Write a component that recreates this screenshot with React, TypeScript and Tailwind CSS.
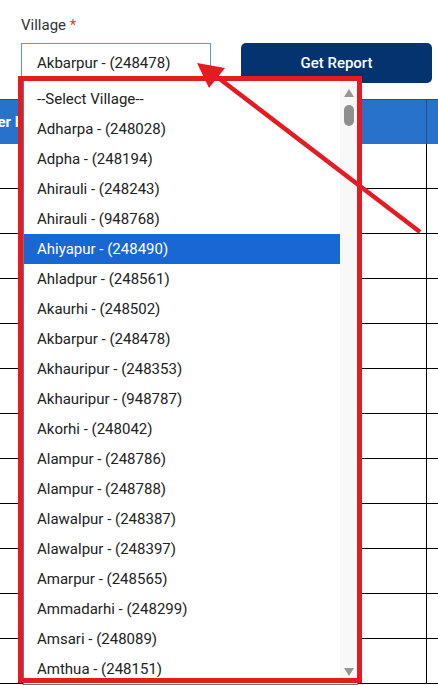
import React from 'react';

const villages = [
  '--Select Village--',
  'Adharpa - (248028)',
  'Adpha - (248194)',
  'Ahirauli - (248243)',
  'Ahirauli - (948768)',
  'Ahiyapur - (248490)',
  'Ahladpur - (248561)',
  'Akaurhi - (248502)',
  'Akbarpur - (248478)',
  'Akhauripur - (248353)',
  'Akhauripur - (948787)',
  'Akorhi - (248042)',
  'Alampur - (248786)',
  'Alampur - (248788)',
  'Alawalpur - (248387)',
  'Alawalpur - (248397)',
  'Amarpur - (248565)',
  'Ammadarhi - (248299)',
  'Amsari - (248089)',
  'Amthua - (248151)',
];

const highlighted = 'Ahiyapur - (248490)';

export default function App() {
  const rows = Array.from({ length: 12 });

  return (
    <div
      className="relative w-[438px] h-[685px] overflow-hidden bg-white text-[#222]"
      style={{ fontFamily: 'Roboto, "Liberation Sans", sans-serif' }}
    >
      {/* form */}
      <div className="pl-[21px] pt-[15px]">
        <label className="block text-[15px] leading-[20px] text-[#333]">
          Village <span className="text-[#e53935]">*</span>
        </label>
        <div className="mt-[8px] flex">
          <div className="w-[190px] h-[40px] border border-[#5b9bc9] flex items-center pl-[15px] text-[15px]">
            Akbarpur - (248478)
          </div>
          <button className="ml-[30px] w-[191px] h-[40px] rounded-[5px] bg-[#053370] text-white text-[15px] font-medium">
            Get Report
          </button>
        </div>
      </div>

      {/* table */}
      <div className="mt-[16px] ml-[-60px] w-[520px]">
        <div className="flex h-[45px] bg-[#2872cc] border-t border-[#1d4f91] text-white font-bold text-[15px]">
          <div className="w-[487px] border-r border-[#1d4f91] flex items-center pl-[23px]">Farmer Name</div>
          <div className="flex-1" />
        </div>
        {rows.map((_, i) => (
          <div key={i} className="flex h-[45px] border-b border-black">
            <div className="w-[487px] border-r border-black" />
            <div className="flex-1" />
          </div>
        ))}
      </div>

      {/* open listbox */}
      <div className="absolute left-[23px] top-[80px] w-[335px] h-[605px] bg-white border border-[#767676] shadow-[0_2px_3px_rgba(0,0,0,0.35)] flex">
        <ul className="flex-1 pt-[3px]">
          {villages.map((v) => (
            <li
              key={v}
              className={
                v === highlighted
                  ? 'h-[30px] flex items-center pl-[13px] text-[15px] bg-[#1967d2] text-white'
                  : 'h-[30px] flex items-center pl-[13px] text-[15px]'
              }
            >
              {v}
            </li>
          ))}
        </ul>
        <div className="w-[17px] bg-[#f8f8f8] flex flex-col items-center pt-[8px] pb-[8px]">
          <svg width="10" height="8" viewBox="0 0 10 8">
            <polygon points="5,0 10,8 0,8" fill="#979797" />
          </svg>
          <div className="mt-[8px] w-[10px] h-[21px] rounded-full bg-[#8f8f8f]" />
          <div className="flex-1" />
          <svg width="10" height="8" viewBox="0 0 10 8">
            <polygon points="0,0 10,0 5,8" fill="#979797" />
          </svg>
        </div>
      </div>

      {/* annotation box */}
      <div className="absolute left-[18px] top-[76px] w-[344px] h-[607px] border-[5px] border-[#e31b23] pointer-events-none" />

      {/* annotation arrow */}
      <svg className="absolute inset-0 pointer-events-none" width="438" height="685" viewBox="0 0 438 685">
        <line x1="420" y1="232" x2="212" y2="73" stroke="#e31b23" strokeWidth="4.5" />
        <polygon points="197,63 225,68 209,88" fill="#e31b23" />
      </svg>
    </div>
  );
}
